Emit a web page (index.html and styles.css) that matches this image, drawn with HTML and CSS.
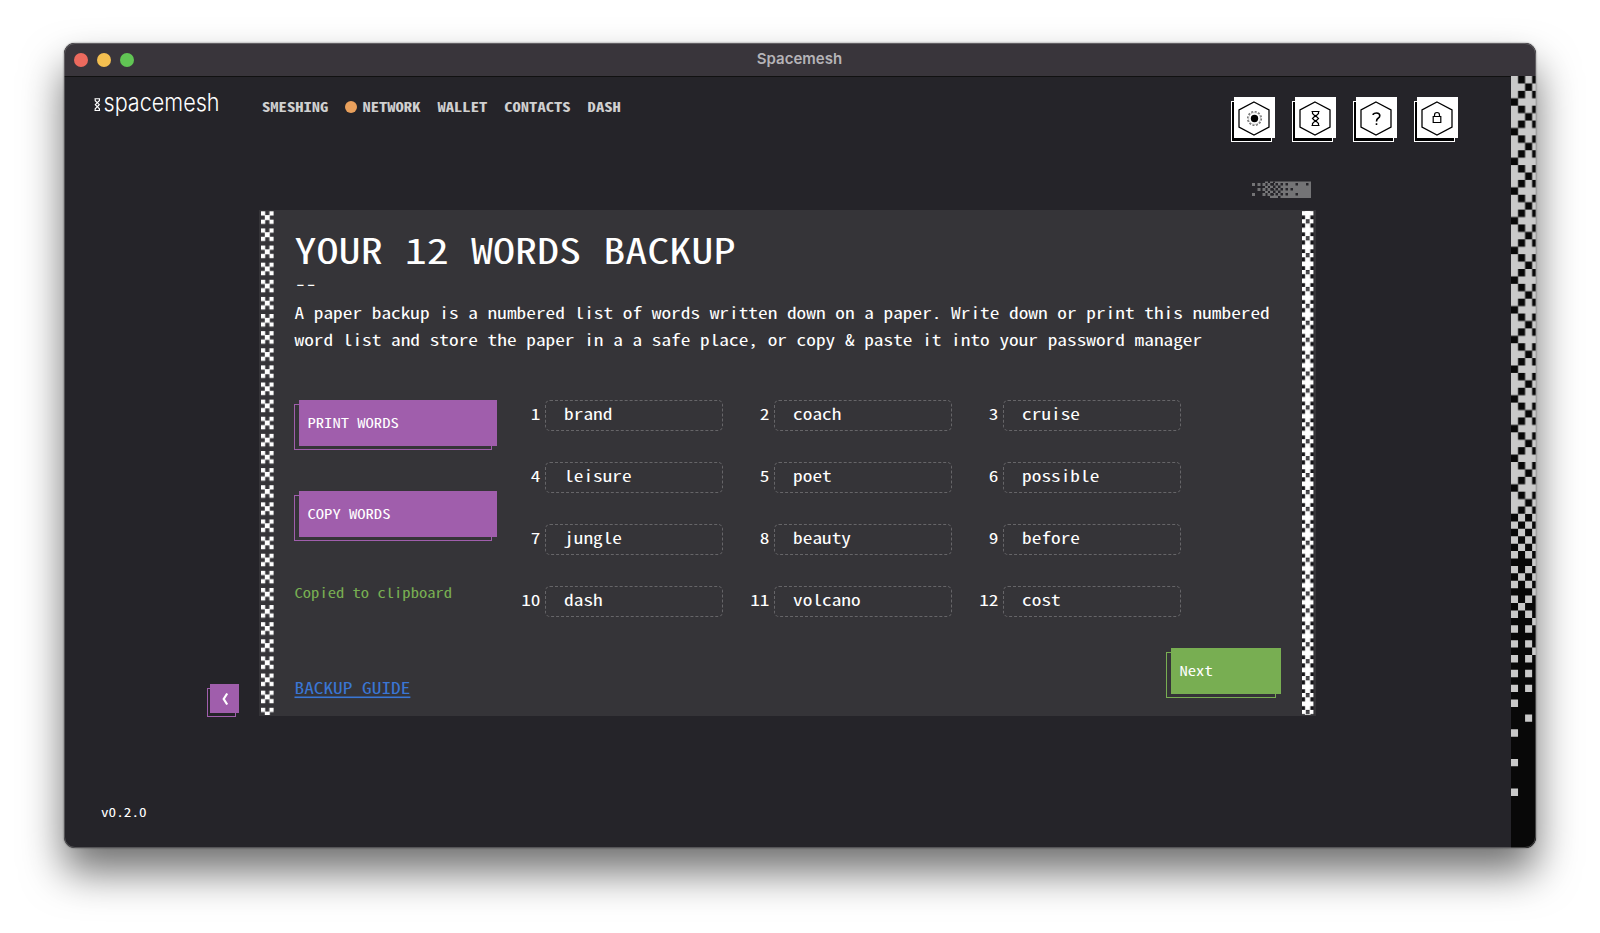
FILE: index.html
```html
<!DOCTYPE html>
<html lang="en">
<head>
<meta charset="utf-8">
<title>Spacemesh</title>
<link rel="stylesheet" href="styles.css">
</head>
<body>
<div class="window">
  <div class="titlebar">
    <div class="lights"><i class="light red"></i><i class="light yellow"></i><i class="light green"></i></div>
    <span class="title">Spacemesh</span>
  </div>
  <div class="app">
    <div class="main">
      <header class="header">
        <svg class="logo" width="130" height="30" viewBox="0 0 130 30">
          <path d="M1.500 6.700h5.600M1.500 18.500h5.600M2.200 7v1.700l2.100 2 2.100-2V7M4.300 10.700l-2 2 2 2 2-2ZM2.200 18.500v-1.700l2.100-2.100 2.100 2.100v1.700" fill="none" stroke="#fff" stroke-width="1.150"/>
          <text x="10.500" y="18.900" textLength="116" lengthAdjust="spacingAndGlyphs">spacemesh</text>
        </svg>
        <nav class="nav">
          <a class="t">SMESHING</a><a class="net"><i class="dot"></i><span class="t">NETWORK</span></a><a class="t">WALLET</a><a class="t">CONTACTS</a><a class="t">DASH</a>
        </nav>
        <div class="tools">
          <div class="tool"><svg viewBox="0 0 41 41"><path class="hex" d="M20 5L35 13V30L20 38L5 30V13Z"/><circle cx="20.500" cy="21.500" r="6.800" fill="none" stroke="#777" stroke-width="1.600" stroke-dasharray="2 1.560"/><circle cx="20.500" cy="21.500" r="5.900" fill="none" stroke="#999" stroke-width=".5"/><circle cx="20.500" cy="21.500" r="3.700"/></svg></div>
          <div class="tool"><svg viewBox="0 0 41 41"><path class="hex" d="M20 5L35 13V30L20 38L5 30V13Z"/><path class="glyph" d="M16.500 14.500h8M16.500 28.500h8M17.500 14.500v2l3 3 3-3v-2M20.500 18.500l-3 3 3 3 3-3ZM17.500 28.500v-2l3-3 3 3v2"/></svg></div>
          <div class="tool"><svg viewBox="0 0 41 41"><path class="hex" d="M20 5L35 13V30L20 38L5 30V13Z"/><path class="glyph q" d="M17.200 18v-.800q.8-1.200 3.300-1.200 3.300 0 3.300 2.800 0 1.500-1.700 2.500-1.600 1-1.600 3.200M20.500 26.200v1.700"/></svg></div>
          <div class="tool"><svg viewBox="0 0 41 41"><path class="hex" d="M20 5L35 13V30L20 38L5 30V13Z"/><path class="glyph" d="M16.200 19.500h7.600v6h-7.600ZM17.500 19.500v-1.500q0-2.500 2.500-2.500t2.500 2.500v1.500"/></svg></div>
        </div>
      </header>
      <svg class="badge" width="59" height="17" viewBox="0 0 59 17">
        <path fill="#747476" d="M22 .5H59V17H22ZM0 2h3v3H0zM5.500 2h3v3h-3zM10.500 2h3v3h-3zM15.500 2h3v3h-3zM5.500 7h3v3h-3zM10.500 7h3v3h-3zM15.500 7h3v3h-3zM0 12h3v3H0zM10.500 12h3v3h-3zM15.500 12h3v3h-3zM13 .5h3V2h-3zM18 .5h4V2h-4zM13 5h3v2h-3zM18 4.500h4v3h-4zM13 10h3v2h-3zM18 9.500h4v3h-4zM18 14.500h4V17h-4z"/>
        <path fill="#252429" d="M18.500 2h2.500v2.500h-2.500zM23.500 2h2.500v2.500h-2.500zM28.500 2h2.500v2.500h-2.500zM33.500 2h2.500v2.500h-2.500zM43.500 2h2.500v2.500h-2.500zM54 2h2.500v2.500H54zM18.500 7h2.500v2.500h-2.500zM23.500 7h2.500v2.500h-2.500zM28.500 7h2.500v2.500h-2.500zM33.500 7h2.500v2.500h-2.500zM38.500 7h2.500v2.500h-2.500zM18.500 12h2.500v2.500h-2.500zM23.500 12h2.500v2.500h-2.500zM28.500 12h2.500v2.500h-2.500zM33.500 12h2.500v2.500h-2.500zM43.500 12h2.500v2.500h-2.500zM21 4.500h2.500V7H21zM26 4.500h2.500V7H26zM21 9.500h2.500V12H21zM26 9.500h2.500V12H26zM26 15h2.500v2H26zM21 .5h2V2h-2z"/>
      </svg>
      <div class="stage">
        <button class="back"><svg width="29" height="29" viewBox="0 0 29 29"><path d="M17.200 9.500l-3.500 5.500 3.500 5.500" fill="none" stroke="#fff" stroke-width="2.200"/></svg></button>
        <section class="panel">
          <svg class="strip left" width="13" height="505">
            <defs><pattern id="cross" width="12.600" height="17.120" patternUnits="userSpaceOnUse" patternTransform="translate(0 .3)"><path fill="#fff" transform="scale(4.200)" d="M0 0h1v1H0zM2 0h1v1H2zM.9 .9h1.200v1.200H.9zM0 2h1v1H0zM2 2h1v1H2z"/></pattern></defs>
            <rect width="12.600" height="504" fill="url(#cross)"/>
          </svg>
          <div class="content">
            <h1 class="t">YOUR 12 WORDS BACKUP</h1>
            <div class="dashes">--</div>
            <p class="intro t">A paper backup is a numbered list of words written down on a paper. Write down or print this numbered<br>word list and store the paper in a a safe place, or copy &amp; paste it into your password manager</p>
            <div class="columns">
              <div class="actions">
                <button class="btn purple"><span class="t">PRINT WORDS</span></button>
                <button class="btn purple"><span class="t">COPY WORDS</span></button>
                <div class="copied t">Copied to clipboard</div>
              </div>
              <div class="words">
                <div class="word"><span class="num t">1</span><div class="box"><span class="t">brand</span></div></div>
                <div class="word"><span class="num t">2</span><div class="box"><span class="t">coach</span></div></div>
                <div class="word"><span class="num t">3</span><div class="box"><span class="t">cruise</span></div></div>
                <div class="word"><span class="num t">4</span><div class="box"><span class="t">leisure</span></div></div>
                <div class="word"><span class="num t">5</span><div class="box"><span class="t">poet</span></div></div>
                <div class="word"><span class="num t">6</span><div class="box"><span class="t">possible</span></div></div>
                <div class="word"><span class="num t">7</span><div class="box"><span class="t">jungle</span></div></div>
                <div class="word"><span class="num t">8</span><div class="box"><span class="t">beauty</span></div></div>
                <div class="word"><span class="num t">9</span><div class="box"><span class="t">before</span></div></div>
                <div class="word"><span class="num t">10</span><div class="box"><span class="t">dash</span></div></div>
                <div class="word"><span class="num t">11</span><div class="box"><span class="t">volcano</span></div></div>
                <div class="word"><span class="num t">12</span><div class="box"><span class="t">cost</span></div></div>
              </div>
            </div>
            <div class="foot">
              <a class="guide t">BACKUP GUIDE</a>
              <button class="btn green"><span class="t">Next</span></button>
            </div>
          </div>
          <svg class="strip right" width="12" height="505">
            <defs><pattern id="plus" width="11.400" height="16.920" patternUnits="userSpaceOnUse" patternTransform="translate(0 -8.700)"><rect width="11.400" height="17" fill="#151418"/><path fill="#fff" transform="scale(3.800 4.230)" d="M0 0h1v1H0zM2 0h1v1H2zM.8 1h1.400v1H.8zM0 2h3v1.100H0zM.8 3h1.400v1H.8z"/><path fill="#4a494d" transform="scale(3.800 4.230)" d="M1 .1h1v.8H1z"/></pattern></defs>
            <rect width="11.400" height="504" fill="url(#plus)"/>
          </svg>
        </section>
      </div>
      <div class="version t">v0.2.0</div>
    </div>
    <svg class="side" viewBox="0 0 3.550 104" preserveAspectRatio="none">
      <defs><pattern id="mesh" width="4" height="4" patternUnits="userSpaceOnUse"><rect width="4" height="4" fill="#c9c9c9"/><path d="M1 0h1v1H1zM3 0h1v1H3zM2 1h1v1H2zM1 2h1v1H1zM3 2h1v1H3zM0 3h1v1H0z" fill="#080808"/></pattern></defs>
      <rect width="4" height="104" fill="#080808"/>
      <rect width="4" height="59" fill="url(#mesh)"/>
      <path fill="#c9c9c9" d="M1 59h1v1H1zM3 59h1v1H3zM0 60h1v1H0zM2 60h1v1H2zM1 61h1v1H1zM3 61h1v1H3zM0 62h1v1H0zM2 62h1v1H2zM1 63h1v1H1zM3 63h1v1H3zM0 64h1v1H0zM2 64h1v1H2zM3 65h1v1H3zM0 66h1v1H0zM2 66h1v1H2zM1 67h1v1H1zM3 67h1v1H3zM0 68h1v1H0zM2 68h1v1H2zM3 69h1v1H3zM0 70h1v1H0zM2 70h1v1H2zM1 71h1v1H1zM0 72h1v1H0zM2 72h1v1H2zM3 73h1v1H3zM0 74h1v1H0zM2 74h1v1H2zM0 76h1v1H0zM2 76h1v1H2zM3 77h1v1H3zM0 78h1v1H0zM2 78h1v1H2zM0 80h1v1H0zM2 80h1v1H2zM0 82h1v1H0zM2 82h1v1H2zM0 84h1v1H0zM2 86h1v1H2zM0 88h1v1H0zM0 92h1v1H0zM0 96h1v1H0z"/>
    </svg>
  </div>
</div>
</body>
</html>
```
FILE: styles.css
```css
*, *::before, *::after { box-sizing: border-box; }
body {
  margin: 0;
  height: 933px;
  padding: 43px 64px 0;
  background: #fff;
  overflow: hidden;
  font-family: "Noto Sans Mono CJK JP", "Noto Sans Mono CJK SC", "Liberation Mono", monospace;
  color: #fff;
}
button { border: 0; margin: 0; padding: 0; font: inherit; color: inherit; text-align: left; }
svg { display: block; }

/* Widened monospace lettering */
.t { display: block; transform: translateY(.8px) scaleY(.79); }

.window {
  width: 1472px;
  height: 805px;
  border-radius: 11px;
  overflow: hidden;
  background: #252429;
  box-shadow: 0 24px 42px rgba(0, 0, 0, .56), 0 0 2px rgba(0, 0, 0, .5);
  display: flex;
  flex-direction: column;
  position: relative;
}
.window::after {
  content: "";
  position: absolute;
  inset: 0;
  border: 1.500px solid rgba(160, 160, 160, .4);
  border-radius: 11px;
  pointer-events: none;
}
.titlebar {
  height: 34px;
  flex: none;
  display: grid;
  grid-template-columns: 1fr auto 1fr;
  align-items: center;
  background: #39353b;
  border-bottom: 1px solid #111;
}
.lights { display: flex; gap: 9px; padding: 0 0 0 9.500px; }
.light { width: 14px; height: 14px; border-radius: 50%; }
.red { background: #ec6a5e; }
.yellow { background: #f4bf50; }
.green.light { background: #61c554; }
.title { font: 600 15px/30px Inter, sans-serif; color: #b5b3b7; padding-bottom: 1px; margin-left: -1px; }

.app { display: flex; flex: 1; }
.main { flex: 1; display: flex; flex-direction: column; }
.side { width: 25px; height: 772px; margin-top: -1px; flex: none; }

.header { display: flex; height: 104px; padding: 15px 53px 0 29px; }
.logo { overflow: visible; }
.logo text { font: 300 24px Inter, sans-serif; fill: #fff; }
.nav { display: flex; gap: 17px; margin: 4px 0 0 39px; height: 20px; font-weight: 700; font-size: 16.600px; line-height: 20px; color: #d0d0d0; }
.net { display: flex; align-items: center; gap: 5px; }
.dot { width: 12px; height: 12px; border-radius: 50%; background: #e9a05c; margin-top: 1px; }
.tools { display: flex; gap: 20px; margin-left: auto; padding-top: 5px; }
.tool { position: relative; width: 41px; height: 41px; }
.tool::before {
  content: "";
  position: absolute;
  left: -3px;
  top: 4px;
  width: 41px;
  height: 41px;
  border: 1px solid #fff;
  background: #000;
}
.tool svg { position: relative; width: 41px; height: 41px; background: #fff; }
.hex { fill: none; stroke: #000; stroke-width: 1.300; }
.glyph { fill: none; stroke: #000; stroke-width: 1.200; }
.q { stroke-width: 1.600; }

.badge { margin-left: 1188px; flex: none; }
.stage { display: flex; align-items: flex-end; margin-top: 12px; padding-left: 146px; }
.back { position: relative; width: 29px; height: 29px; margin: 0 19.500px 3.500px 0; background: #a05eac; }
.back::before {
  content: "";
  position: absolute;
  left: -3px;
  top: 4px;
  width: 29px;
  height: 29px;
  border: 1px solid #a05eac;
  z-index: -1;
}
.stage, .panel, .actions, .foot { isolation: isolate; }
.panel { display: flex; width: 1057.500px; height: 506px; background: #353438; padding: 1px 2.500px 0; }
.strip { flex: none; height: 504px; }
.content { flex: 1; padding: 15px 21px 0 20.500px; }
h1 { margin: 0; font-weight: 400; font-size: 44.100px; line-height: 44px; white-space: nowrap; }
.dashes { width: 40px; margin-top: 2.500px; font-size: 17px; line-height: 20px; transform: scaleX(1.27); transform-origin: 0 0; }
.intro { margin: -2.500px 0 0; font-size: 19.320px; line-height: 34.800px; padding: .8px 0; white-space: nowrap; }
.columns { display: flex; margin-top: 38.800px; height: 217px; }
.actions { width: 221px; padding-left: 4px; }
.btn { position: relative; display: block; height: 46px; padding: 0 0 2px 9px; font-size: 16.600px; line-height: 44px; }
.btn::before {
  content: "";
  position: absolute;
  left: -5px;
  top: 4.500px;
  width: 100%;
  height: 100%;
  border: 1px solid;
  z-index: -1;
}
.purple { width: 198px; margin-bottom: 45px; background: #a05eac; }
.purple::before { border-color: #a05eac; }
.green.btn { width: 110px; background: #78ae52; }
.green::before { border-color: #78ae52; }
.copied { margin: 1px 0 0 -4px; font-size: 16.600px; line-height: 20px; color: #78ae52; }
.words { display: grid; grid-template-columns: repeat(3, 207px); grid-auto-rows: 31px; gap: 31px 22px; font-size: 19.320px; }
.word { display: flex; gap: 4px; }
.num { width: 25px; display: flex; justify-content: flex-end; line-height: 27px; height: 27px; }
.box { flex: 1; line-height: 27px; padding-left: 18.600px; border: 1px dashed #666568; border-radius: 5px; }
.box .t { transform: scaleY(.79); }
.foot { display: flex; justify-content: space-between; margin-top: 31px; }
.guide { margin-top: 29.500px; height: 20px; font-size: 19.320px; line-height: 20px; color: #3a76d4; text-decoration: underline; text-underline-offset: 2.500px; text-decoration-thickness: 2px; }
.version { margin: 85px 0 0 37px; font-size: 15.200px; line-height: 20px; }
```
